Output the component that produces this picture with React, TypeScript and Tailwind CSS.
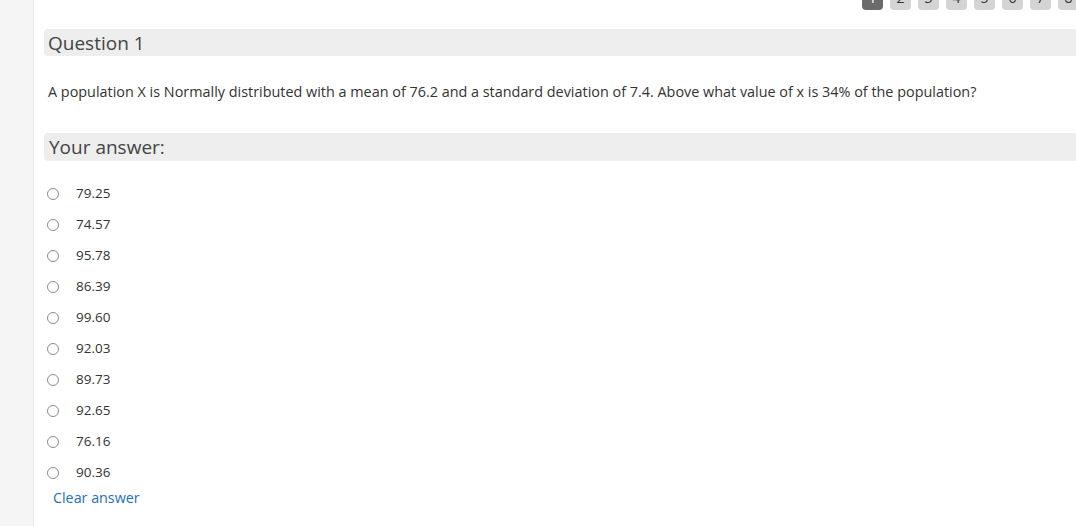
const options = ['79.25', '74.57', '95.78', '86.39', '99.60', '92.03', '89.73', '92.65', '76.16', '90.36'];
const pages = [1, 2, 3, 4, 5, 6, 7, 8];

export default function App() {
  return (
    <div className="flex h-[526px] w-[1076px] overflow-hidden bg-white font-['Open_Sans',sans-serif] text-[#333]">
      {/* left rail */}
      <div className="w-[34px] shrink-0 border-r border-[#e8e8e8] bg-[#f5f5f5]" />

      <div className="flex min-w-0 flex-1 flex-col pl-[10px]">
        {/* pager, clipped at the top */}
        <div className="flex h-[10px] items-end gap-[7px] overflow-hidden pl-[818px]">
          {pages.map((p) => (
            <div
              key={p}
              className={
                p === 1
                  ? 'flex h-[26px] w-[21px] shrink-0 items-center justify-center rounded-[4px] bg-[#6b6b6b] text-[14px] text-white'
                  : 'flex h-[26px] w-[21px] shrink-0 items-center justify-center rounded-[4px] bg-[#d4d4d4] text-[14px] text-[#333]'
              }
            >
              {p}
            </div>
          ))}
        </div>

        <div className="mt-[19px] flex h-[27px] items-center rounded-l-[4px] bg-[#eeeeee] pl-[4px] pt-[1px] text-[19px] text-[#444]">
          Question 1
        </div>

        <p className="mt-[25px] pl-[4px] text-[14.4px] leading-[22px]">
          A population X is Normally distributed with a mean of 76.2 and a standard deviation of 7.4. Above what value of x is 34% of the population?
        </p>

        <div className="mt-[30px] flex h-[28px] items-center rounded-l-[4px] bg-[#eeeeee] pl-[5px] text-[19px] text-[#444]">
          Your answer:
        </div>

        <div className="mt-[17px] flex flex-col">
          {options.map((o) => (
            <label key={o} className="flex h-[31px] items-center">
              <span className="ml-[3px] h-[12px] w-[12px] rounded-full border border-[#8a8a8a]" />
              <span className="ml-[17px] text-[13.5px]">{o}</span>
            </label>
          ))}
        </div>

        <a className="ml-[9px] mt-[-1px] text-[14.3px] text-[#1d6fb8]">Clear answer</a>
      </div>
    </div>
  );
}
